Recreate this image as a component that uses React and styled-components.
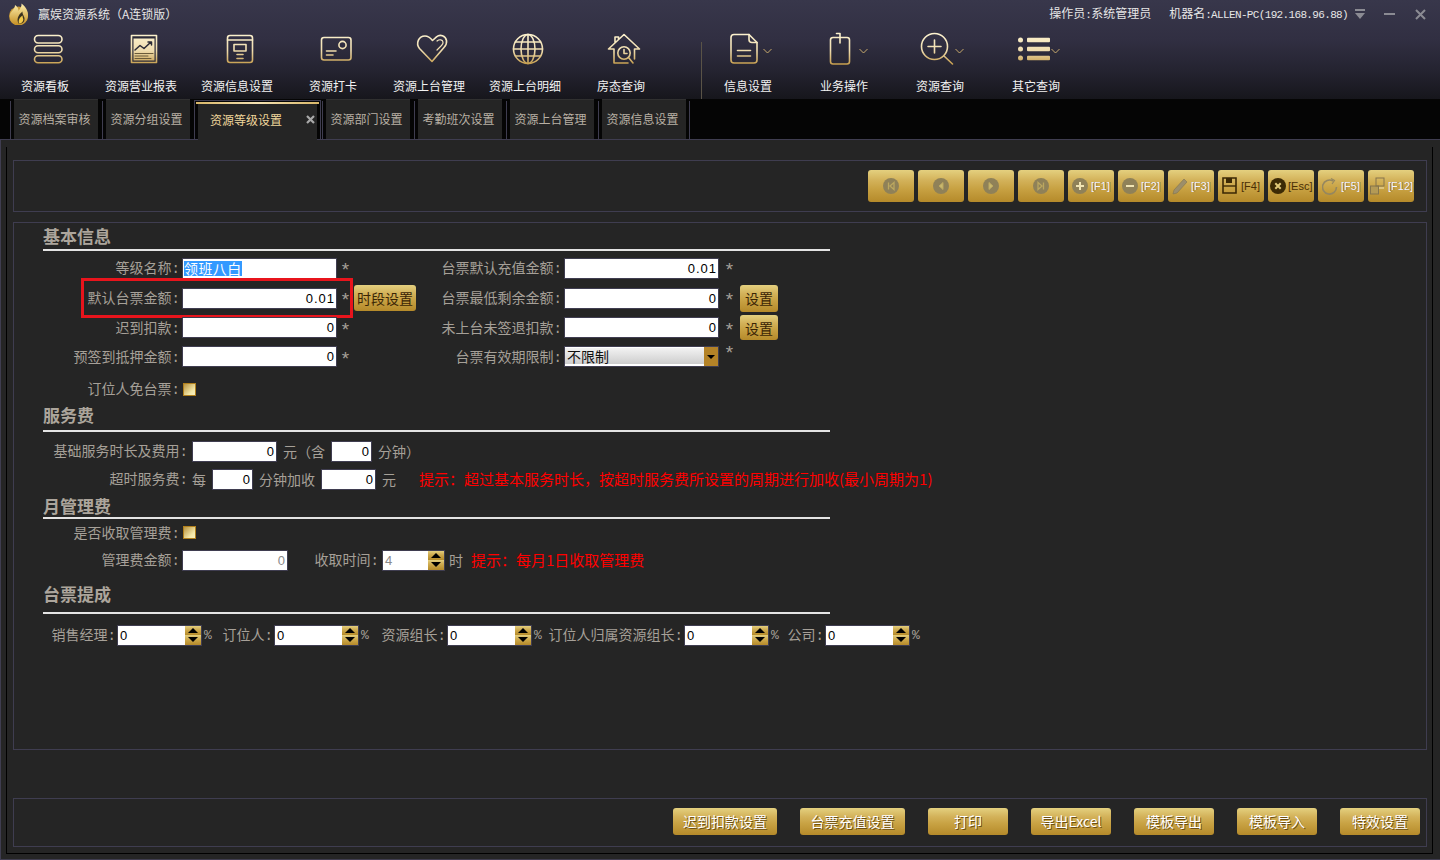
import React, { useId } from "react";
import styled, { createGlobalStyle } from "styled-components";

const CJK = '"Noto Sans CJK SC", "Liberation Sans", sans-serif';
const MONO = '"Liberation Mono", "Noto Sans CJK SC", monospace';
const NUM = '"Liberation Sans", sans-serif';
const LINE = "#3f3d50";
const LABEL = "#a6a098";
const GOLD = "linear-gradient(#e4d07f 0%, #d3b25a 32%, #c8a243 58%, #b58a2a 100%)";

const Global = createGlobalStyle`
  html, body { margin: 0; padding: 0; background: #252525; }
  body { width: 1440px; height: 860px; overflow: hidden; font-family: ${CJK}; }
`;

const Page = styled.div`
  width: 1440px; height: 860px; display: flex; flex-direction: column; overflow: hidden;
`;
const Header = styled.header`
  flex: none; height: 99px; display: flex; flex-direction: column;
  background: linear-gradient(#38374b 0%, #312f42 40%, #242330 72%, #16161c 100%);
`;
const TitleBar = styled.div`
  flex: none; height: 28px; display: flex; align-items: center; padding: 0 14px 0 8px; color: #e6e6e6; font-size: 12px;
`;
const AppTitle = styled.span`margin-left: 8px; line-height: 14px; white-space: nowrap;`;
const Status = styled.div`margin-left: auto; display: flex; align-items: center;`;
const StatusText = styled.span`
  margin-left: ${p => p.$ml || 0}px; line-height: 14px; white-space: nowrap;
`;
const Machine = styled.span`font: 11px/14px ${MONO}; letter-spacing: -0.65px;`;
const WinIcon = styled.svg`flex: none; margin-left: ${p => p.$ml}px; display: block;`;

const Toolbar = styled.nav`flex: 1; display: flex; margin-left: -3px;`;
const ToolItem = styled.div`
  flex: none; width: 96px; display: flex; flex-direction: column; align-items: center; padding-top: 1px;
`;
const ToolIconRow = styled.div`
  display: flex; height: 40px; align-items: center; padding-left: ${p => (p.$menu ? 0 : 6)}px;
`;
const ToolLabel = styled.span`
  margin-top: 10px; font-size: 12px; line-height: 14px; color: #f2f2f2; white-space: nowrap;
`;
const ToolDivider = styled.div`
  flex: none; align-self: flex-end; width: 1px; height: 57px; margin: 0 -2px 0 32px; background: #5a5347;
`;

const TabStrip = styled.div`
  flex: none; height: 40px; display: flex; padding-left: 10px; background: #050505; position: relative; z-index: 1;
`;
const Tab = styled.div`
  flex: none; width: 92px; height: 38px; margin-top: 2px; box-sizing: border-box; border-left: 1px solid ${LINE};
  border-right: ${p => (p.$last ? `1px solid ${LINE}` : "none")};
  padding-left: 3px;
`;
const TabFace = styled.div`
  width: 84px; height: 40px; margin-top: -2px; box-sizing: border-box; background: #252525; border-top: 1px solid #303030;
  display: flex; align-items: center; justify-content: center; padding: 0 3px 2px 0;
  font-size: 12px; color: #b8b0a4; white-space: nowrap;
`;
const ActiveTab = styled.div`
  flex: none; width: 127px; height: 40px; margin: 1px 1px 0 0; box-sizing: border-box; display: flex; flex-direction: column;
  border: 1px solid ${LINE}; border-bottom: none; padding: 1px 1px 0;
`;
const ActiveBar = styled.div`
  flex: none; height: 2px; background: linear-gradient(90deg, #d9b769, #f4e2b3 50%, #d9b769);
`;
const ActiveFace = styled.div`
  flex: 1; margin: 0 2px; background: #252525; display: flex; align-items: center; padding: 0 0 6px 12px;
  font-size: 12px; color: #f0d79c; white-space: nowrap;
`;
const TabClose = styled.svg`margin-left: auto; margin-right: 2px; display: block;`;

const Main = styled.main`
  flex: 1; min-height: 0; display: flex; box-sizing: border-box; background: #252525;
  border-top: 1px solid ${LINE}; border-left: 1px solid ${LINE}; border-bottom: 1px solid ${LINE};
  padding: 7px 7px 5px 5px;
`;
const Inner = styled.div`
  flex: 1; min-width: 0; display: flex; flex-direction: column; box-sizing: border-box;
  border: 1px solid #000; border-top: none; padding: 13px 5px 6px 6px;
`;
const Panel = styled.section`border: 1px solid ${LINE}; box-sizing: border-box;`;
const ActionPanel = styled(Panel)`
  flex: none; height: 52px; display: flex; justify-content: flex-end; gap: 4px; padding: 9px 12px 0 0;
`;
const GoldButton = styled.button`
  flex: none; box-sizing: border-box; border: none; margin: 0; padding: 0; background: ${GOLD}; border-radius: 3px;
  font-family: ${CJK};
`;
const ActionButton = styled(GoldButton)`
  width: 46px; height: 32px; display: flex; align-items: center; justify-content: ${p => (p.$nav ? "center" : "flex-start")};
  padding-left: ${p => (p.$nav ? 0 : p.$wide ? 2 : 4)}px; gap: ${p => (p.$wide ? 2 : 3)}px;
  font: 11px/14px ${NUM}; white-space: nowrap;
  color: ${p => (p.$on ? "#4a2f05" : "#f2f2ff")};
  text-shadow: ${p => (p.$on ? "none" : "1px 0 0 #8f7430")};
`;
const FormPanel = styled(Panel)`
  flex: 1; min-height: 0; margin-top: 10px; padding: 4px 0 0 29px;
`;
const SectionHead = styled.h2`
  width: 787px; margin: ${p => p.$mt || 0}px 0 0; box-sizing: content-box; height: 20px; padding-bottom: ${p => p.$pb}px;
  border-bottom: 2px solid #e4e4e4; font: bold 17px/18px ${CJK}; color: #aca59c;
`;
const Rows = styled.div`margin-top: ${p => p.$mt}px;`;
const Row = styled.div`
  display: flex; align-items: center; position: relative; height: ${p => p.$h || 28}px; gap: ${p => p.$gap || 0}px;
  margin-top: ${p => p.$mt || 0}px;
`;
const Group = styled.div`
  flex: none; width: ${p => p.$w}px; display: flex; align-items: center; height: 100%; position: relative;
`;
const Label = styled.label`
  flex: none; width: ${p => p.$w + 2}px; margin-right: ${p => (p.$mr ?? 4) - 2}px; padding-top: 2px; text-align: right; color: ${LABEL};
  font: 14px/18px ${MONO}; white-space: nowrap;
`;
const Text = styled.span`
  flex: none; color: ${LABEL}; font-size: 14px; line-height: 18px; white-space: nowrap;
`;
const Star = styled.span`
  flex: none; width: ${p => p.$w}px; text-align: center; color: ${LABEL}; font: 19px/14px ${MONO};
  padding-top: ${p => (p.$up ? 0 : 6)}px; margin-bottom: ${p => (p.$up ? 6 : 0)}px;
`;
const Pct = styled.span`
  flex: none; width: 8px; margin-left: 2px; color: ${LABEL}; font: 13px/14px ${MONO}; padding-top: 2px;
`;
const Field = styled.div`
  flex: none; width: ${p => p.$w}px; height: 21px; box-sizing: border-box; border: 1px solid ${LINE}; background: #fff;
  color: ${p => (p.$muted ? "#8a8a8a" : "#000")}; font: 13px/19px ${NUM}; letter-spacing: 1px; text-align: right; padding: 0 1px;
`;
const NameField = styled(Field)`text-align: left; font: 14px/19px ${CJK}; letter-spacing: 0.4px;`;
const Selected = styled.span`background: #3399ff; color: #fff; display: inline-block; height: 15px; line-height: 15px;`;
const SmallButton = styled(GoldButton)`
  width: ${p => p.$w}px; height: ${p => p.$h || 26}px; color: #3a2505; font-size: 14px; line-height: 18px;
`;
const Highlight = styled.div`
  position: absolute; left: 38px; top: 50%; transform: translateY(-50%); width: 272px; height: 40px;
  box-sizing: border-box; border: 3px solid #e8141c; pointer-events: none;
`;
const Check = styled.div`
  flex: none; width: 13px; height: 13px; margin-left: 1px; box-sizing: border-box; border: 1px solid #b07f1c;
  background: linear-gradient(135deg, #b8923e, #f3e7a8 70%, #f8f0c0);
`;
const SelectBox = styled.div`
  flex: none; width: 155px; height: 21px; box-sizing: border-box; border: 1px solid ${LINE}; display: flex; background: #fff;
`;
const SelectValue = styled.div`
  flex: 1; margin: 1px 0 2px; padding-left: 2px; background: linear-gradient(#f2f2f2, #e0e0e0 50%, #cdcdcd);
  font-size: 14px; line-height: 16px; color: #111;
`;
const SelectArrow = styled.div`
  flex: none; width: 14px; background: #b48327; display: flex; align-items: center; justify-content: center;
`;
const Spin = styled.div`
  flex: none; width: ${p => p.$w}px; height: 21px; box-sizing: border-box; border: 1px solid ${LINE}; background: #fff;
  display: flex; color: ${p => (p.$muted ? "#8a8a8a" : "#000")}; font: 13px/19px ${NUM};
`;
const SpinValue = styled.span`flex: 1; padding-left: 2px;`;
const SpinArrows = styled.div`flex: none; width: 16px; display: flex; flex-direction: column;`;
const SpinArrow = styled.div`
  flex: 1; background: ${GOLD}; display: flex; align-items: center; justify-content: center;
`;
const Hint = styled.span`
  flex: none; margin-left: ${p => p.$ml || 0}px; color: #ff0000; font-size: 15px; line-height: 18px; white-space: nowrap;
`;
const BottomPanel = styled(Panel)`
  flex: none; height: 49px; margin-top: 48px; display: flex; justify-content: flex-end; gap: 23px; padding: 9px 6px 0 0;
`;
const BottomButton = styled(GoldButton)`
  width: ${p => p.$w}px; height: 27px; padding-bottom: 2px; color: #fff; font-size: 14px; line-height: 18px; white-space: nowrap;
  text-shadow: 1px 1px 0 #6d4f12;
`;

function Gold({ children }) {
  const id = useId();
  return (
    <svg width="40" height="40" viewBox="0 0 40 40" fill="none" stroke={`url(#${id})`} strokeWidth="1.6"
      strokeLinecap="round" strokeLinejoin="round" style={{ display: "block", flex: "none" }}>
      <defs>
        <linearGradient id={id} gradientUnits="userSpaceOnUse" x1="0" y1="4" x2="0" y2="36">
          <stop offset="0" stopColor="#fdf3d0" />
          <stop offset="0.55" stopColor="#efdcae" />
          <stop offset="1" stopColor="#c39a48" />
        </linearGradient>
      </defs>
      {children(id)}
    </svg>
  );
}

const icons = {
  stack: () => (<>
    <rect x="6.5" y="6.5" width="27.5" height="7.5" rx="3.7" />
    <rect x="6.5" y="16.7" width="27.5" height="7" rx="3.5" />
    <rect x="6.5" y="26.7" width="27.5" height="7" rx="3.5" />
  </>),
  report: (id) => (<>
    <rect x="7.5" y="6.5" width="25" height="27" fill="#2b2a36" />
    <rect x="9.5" y="9.5" width="21" height="22" fill={`url(#${id})`} stroke="none" />
    <path d="M11 21 L16 16.5 L20 19.5 L27 13 M24 13 H27.5 V16" stroke="#2b2a36" strokeWidth="1.5" />
    <path d="M11 24.5 H29 M11 27 H24 M11 29.5 H27" stroke="#6a5a3a" strokeWidth="1" />
  </>),
  info: () => (<>
    <rect x="7.5" y="6.5" width="25" height="27" rx="2.5" />
    <path d="M7.5 11 H32.5 M14 15.5 H26 V22 H14 Z M17 25.5 H23 M17 29.5 H23" />
  </>),
  card: () => (<>
    <rect x="5.5" y="8.5" width="29.5" height="22.5" rx="2.5" />
    <circle cx="26.5" cy="16" r="3.6" />
    <path d="M10.5 22 H20 M10.5 26 H17" />
  </>),
  heart: () => (<>
    <path d="M20 32.5 L7.5 19.5 C3.5 14.5 6.5 7 13 7 C16.5 7 18.5 9 20.5 11.5 L24.5 7.8 C28 5 33.5 6.5 34.5 11.5 C35 14.5 34 16.5 32 18.5 Z" />
    <path d="M25 12 C27.5 10 30.5 10.5 31 13 C31.3 14.5 30.5 15.5 29.5 16.5 L25 21" strokeWidth="1.2" />
  </>),
  globe: () => (<>
    <circle cx="20" cy="20" r="14.5" />
    <ellipse cx="20" cy="20" rx="7" ry="14.5" />
    <path d="M20 5.5 V34.5 M7.5 13 H32.5 M5.5 20 H34.5 M7.5 27 H32.5" />
  </>),
  house: () => (<>
    <path d="M4.5 20 L20 5.5 L35.5 20 H30.5 V30 M10 20 H4.5 M10 20 V34 H24 M11 13.5 V8 H14.5 V10.5" />
    <circle cx="20" cy="24" r="6.2" />
    <path d="M20 20.5 V24.5 H23 M24.7 28.7 L29 34" />
  </>),
  doc: () => (<>
    <path d="M10 5.5 H25 L33 13.5 V31 A3 3 0 0 1 30 34 H10 A3 3 0 0 1 7 31 V8.5 A3 3 0 0 1 10 5.5 Z" />
    <path d="M25 5.5 V10.5 A3 3 0 0 0 28 13.5 H33 M13.5 21.5 H26.5 M13.5 27 H26.5" />
  </>),
  tablet: () => (<>
    <rect x="10.5" y="8.5" width="19" height="26.5" rx="2.5" />
    <path d="M16.5 4.5 H20 V14" />
  </>),
  zoom: () => (<>
    <circle cx="18.5" cy="17.5" r="13" />
    <path d="M28 27 L36.5 35 M18.5 11 V24 M12 17.5 H25" />
  </>),
  list: (id) => (<g fill={`url(#${id})`} stroke="none">
    <circle cx="8.5" cy="11" r="2.5" /><circle cx="8.5" cy="20" r="2.5" /><circle cx="8.5" cy="29" r="2.5" />
    <rect x="15" y="8.7" width="23" height="4.6" rx="1" /><rect x="15" y="17.7" width="23" height="4.6" rx="1" /><rect x="15" y="26.7" width="23" height="4.6" rx="1" />
  </g>),
};

const ChevronSvg = styled.svg`display: block; flex: none; margin-left: -1px; margin-top: 4px;`;
const Chevron = () => (
  <ChevronSvg width="9" height="40" viewBox="0 0 9 40">
    <path d="M0.5 18 L4.5 22 L8.5 18" fill="none" stroke="#d9b872" strokeWidth="0.9" />
  </ChevronSvg>
);

const Logo = () => (
  <svg width="22" height="22" viewBox="0 0 22 22" style={{ display: "block", flex: "none" }}>
    <defs>
      <linearGradient id="logo-g" x1="0" y1="0" x2="0" y2="1">
        <stop offset="0" stopColor="#fff1b0" /><stop offset="1" stopColor="#c58f23" />
      </linearGradient>
    </defs>
    <circle cx="10.5" cy="13" r="9.5" fill="#c89a38" />
    <path d="M2 11 C4 7 7 6 7 2 C10 4 10.5 6 10.5 8 C12 6 14 3 13.5 0.5 C17.5 3.5 20.5 8 20 13 C19.5 18 15 22 10 22 C5 22 1 17.5 2 11 Z" fill="url(#logo-g)" />
    <path d="M11 21 C8 17 10 12 14.5 8.5 C14 12 18 14 16 18.5 C15 20 13 21 11 21 Z" fill="#3a3220" />
    <path d="M11 20.5 C10 17 12 14 14.5 12.5 C14.5 15 16 16 15 18 C14 20 12.5 20.5 11 20.5 Z" fill="#f2c94a" />
  </svg>
);

const Glyph = ({ children }) => (
  <svg width="16" height="18" viewBox="0 0 16 18" style={{ display: "block", flex: "none" }} fill="none">{children}</svg>
);
const disc = "#8f8158";
const actionIcons = {
  first: <><circle cx="8" cy="9" r="8" fill={disc} /><path d="M5.5 5.5 V12.5 M11 5.5 L7 9 L11 12.5 Z" stroke="#bba75f" strokeWidth="1.3" /></>,
  prev: <><circle cx="8" cy="9" r="8" fill={disc} /><path d="M10 5.5 L6 9 L10 12.5 Z" stroke="#bba75f" fill="#c9b96f" /></>,
  next: <><circle cx="8" cy="9" r="8" fill={disc} /><path d="M6 5.5 L10 9 L6 12.5 Z" stroke="#bba75f" fill="#c9b96f" /></>,
  last: <><circle cx="8" cy="9" r="8" fill={disc} /><path d="M10.5 5.5 V12.5 M5 5.5 L9 9 L5 12.5 Z" stroke="#bba75f" strokeWidth="1.3" /></>,
  add: <><circle cx="8" cy="9" r="8" fill={disc} /><path d="M8 5 V13 M4 9 H12" stroke="#f0e4b4" strokeWidth="2" /></>,
  minus: <><circle cx="8" cy="9" r="8" fill={disc} /><path d="M4 9 H12" stroke="#f0e4b4" strokeWidth="2" /></>,
  pencil: <path d="M1 17 L2 13 L12 2 L15 5 L5 16 Z" fill="#9c8e6a" stroke="#80734f" strokeWidth="0.6" />,
  save: <><path d="M1 1 H14 V16 H1 Z" stroke="#3b2905" strokeWidth="1.6" /><rect x="4" y="1" width="6" height="5" fill="#3b2905" /><path d="M1 9 H14" stroke="#3b2905" strokeWidth="1.4" /></>,
  esc: <><circle cx="8" cy="9" r="8" fill="#3c2a05" /><path d="M5.3 6.3 L10.7 11.7 M10.7 6.3 L5.3 11.7" stroke="#e0c878" strokeWidth="2" /></>,
  refresh: <><path d="M11 4 A7 7 0 1 0 14.5 10" stroke="#95875f" strokeWidth="1.6" /><path d="M9 1.5 L12.5 3.5 L10 7" stroke="#95875f" strokeWidth="1.2" /></>,
  windows: <><rect x="0.5" y="9" width="8" height="8" fill="#b49a55" stroke="#85754c" /><rect x="6" y="1" width="8" height="8" stroke="#85754c" /><path d="M9 11 H14" stroke="#f0e4b4" /></>,
};

const mainTools = [
  ["stack", "资源看板"], ["report", "资源营业报表"], ["info", "资源信息设置"], ["card", "资源打卡"],
  ["heart", "资源上台管理"], ["globe", "资源上台明细"], ["house", "房态查询"],
];
const menuTools = [["doc", "信息设置"], ["tablet", "业务操作"], ["zoom", "资源查询"], ["list", "其它查询"]];
const actions = [
  ["first"], ["prev"], ["next"], ["last"], ["add", "[F1]"], ["minus", "[F2]"], ["pencil", "[F3]"],
  ["save", "[F4]", true], ["esc", "[Esc]", true, true], ["refresh", "[F5]"], ["windows", "[F12]", false, true],
];
const bottomActions = [
  ["迟到扣款设置", 104], ["台票充值设置", 105], ["打印", 80], ["导出Excel", 80], ["模板导出", 80], ["模板导入", 80], ["特效设置", 80],
];
const commissions = [["销售经理:", 71], ["订位人:", 59], ["资源组长:", 75], ["订位人归属资源组长:", 139], ["公司:", 43]];

const UpTri = () => <svg width="10" height="5" viewBox="0 0 10 5" style={{ display: "block" }}><path d="M5 0 L10 5 H0 Z" fill="#000" /></svg>;
const DownTri = () => <svg width="10" height="5" viewBox="0 0 10 5" style={{ display: "block" }}><path d="M0 0 H10 L5 5 Z" fill="#000" /></svg>;

const SpinBox = ({ value, w, muted }) => (
  <Spin $w={w} $muted={muted}>
    <SpinValue>{value}</SpinValue>
    <SpinArrows>
      <SpinArrow><UpTri /></SpinArrow>
      <SpinArrow><DownTri /></SpinArrow>
    </SpinArrows>
  </Spin>
);

const Tool = ({ icon, label, menu }) => (
  <ToolItem>
    <ToolIconRow $menu={menu}>
      <Gold>{icons[icon]}</Gold>
      {menu && <Chevron />}
    </ToolIconRow>
    <ToolLabel>{label}</ToolLabel>
  </ToolItem>
);

export default function App() {
  return (
    <Page>
      <Global />
      <Header>
        <TitleBar>
          <Logo />
          <AppTitle>赢娱资源系统（A连锁版）</AppTitle>
          <Status>
            <StatusText>操作员<Machine>:</Machine>系统管理员</StatusText>
            <StatusText $ml={18}>机器名<Machine>:ALLEN-PC(192.168.96.88)</Machine></StatusText>
            <WinIcon $ml={7} width="10" height="10" viewBox="0 0 10 10"><path d="M0 0 H10 V2 H0 Z M0 4 H10 L5 10 Z" fill="#8b8b93" /></WinIcon>
            <WinIcon $ml={19} width="11" height="10" viewBox="0 0 11 10"><path d="M0 4 H11 V6 H0 Z" fill="#8b8b93" /></WinIcon>
            <WinIcon $ml={20} width="11" height="11" viewBox="0 0 11 11"><path d="M1 1 L10 10 M10 1 L1 10" stroke="#8b8b93" strokeWidth="2" /></WinIcon>
          </Status>
        </TitleBar>
        <Toolbar>
          {mainTools.map(([icon, label]) => <Tool key={label} icon={icon} label={label} />)}
          <ToolDivider />
          {menuTools.map(([icon, label]) => <Tool key={label} icon={icon} label={label} menu />)}
        </Toolbar>
      </Header>

      <TabStrip>
        <Tab><TabFace>资源档案审核</TabFace></Tab>
        <Tab><TabFace>资源分组设置</TabFace></Tab>
        <ActiveTab>
          <ActiveBar />
          <ActiveFace>
            资源等级设置
            <TabClose width="9" height="9" viewBox="0 0 9 9"><path d="M1 1 L8 8 M8 1 L1 8" stroke="#a9a9a9" strokeWidth="2.2" /></TabClose>
          </ActiveFace>
        </ActiveTab>
        <Tab><TabFace>资源部门设置</TabFace></Tab>
        <Tab><TabFace>考勤班次设置</TabFace></Tab>
        <Tab><TabFace>资源上台管理</TabFace></Tab>
        <Tab $last><TabFace>资源信息设置</TabFace></Tab>
      </TabStrip>

      <Main>
        <Inner>
          <ActionPanel>
            {actions.map(([icon, text, on, wide]) => (
              <ActionButton key={icon} $nav={!text} $on={on} $wide={wide}>
                <Glyph>{actionIcons[icon]}</Glyph>
                {text}
              </ActionButton>
            ))}
          </ActionPanel>

          <FormPanel>
            <SectionHead $pb={2}>基本信息</SectionHead>
            <Rows $mt={2}>
              <Row $h={30}>
                <Group $w={382}>
                  <Label $w={135}>等级名称:</Label>
                  <NameField $w={155}><Selected>领班八白</Selected></NameField>
                  <Star $w={17}>*</Star>
                </Group>
                <Group $w={360}>
                  <Label $w={135}>台票默认充值金额:</Label>
                  <Field $w={155}>0.01</Field>
                  <Star $w={21}>*</Star>
                </Group>
              </Row>
              <Row $h={30}>
                <Group $w={382}>
                  <Label $w={135}>默认台票金额:</Label>
                  <Field $w={155}>0.01</Field>
                  <Star $w={17}>*</Star>
                  <SmallButton $w={62}>时段设置</SmallButton>
                  <Highlight />
                </Group>
                <Group $w={360}>
                  <Label $w={135}>台票最低剩余金额:</Label>
                  <Field $w={155}>0</Field>
                  <Star $w={21}>*</Star>
                  <SmallButton $w={38} $h={27}>设置</SmallButton>
                </Group>
              </Row>
              <Row $h={29}>
                <Group $w={382}>
                  <Label $w={135}>迟到扣款:</Label>
                  <Field $w={155}>0</Field>
                  <Star $w={17}>*</Star>
                </Group>
                <Group $w={360}>
                  <Label $w={135}>未上台未签退扣款:</Label>
                  <Field $w={155}>0</Field>
                  <Star $w={21}>*</Star>
                  <SmallButton $w={38} $h={25}>设置</SmallButton>
                </Group>
              </Row>
              <Row $h={29}>
                <Group $w={382}>
                  <Label $w={135}>预签到抵押金额:</Label>
                  <Field $w={155}>0</Field>
                  <Star $w={17}>*</Star>
                </Group>
                <Group $w={360}>
                  <Label $w={135}>台票有效期限制:</Label>
                  <SelectBox>
                    <SelectValue>不限制</SelectValue>
                    <SelectArrow><svg width="8" height="4" viewBox="0 0 8 4"><path d="M0 0 H8 L4 4 Z" fill="#000" /></svg></SelectArrow>
                  </SelectBox>
                  <Star $w={21} $up>*</Star>
                </Group>
              </Row>
              <Row $mt={4}>
                <Label $w={135}>订位人免台票:</Label>
                <Check />
              </Row>
            </Rows>

            <SectionHead $mt={3} $pb={4}>服务费</SectionHead>
            <Rows $mt={5}>
              <Row $gap={6}>
                <Label $w={143} $mr={0}>基础服务时长及费用:</Label>
                <Field $w={85}>0</Field>
                <Text>元（含</Text>
                <Field $w={41}>0</Field>
                <Text>分钟）</Text>
              </Row>
              <Row $gap={6}>
                <Label $w={143} $mr={0}>超时服务费:</Label>
                <Text>每</Text>
                <Field $w={41}>0</Field>
                <Text>分钟加收</Text>
                <Field $w={55}>0</Field>
                <Text>元</Text>
                <Hint $ml={17}>提示：超过基本服务时长，按超时服务费所设置的周期进行加收(最小周期为1)</Hint>
              </Row>
            </Rows>

            <SectionHead $mt={4} $pb={0}>月管理费</SectionHead>
            <Row $h={27}>
              <Label $w={135}>是否收取管理费:</Label>
              <Check />
            </Row>
            <Row $gap={4}>
              <Label $w={135} $mr={0}>管理费金额:</Label>
              <Field $w={106} $muted>0</Field>
              <Label $w={85} $mr={1}>收取时间:</Label>
              <SpinBox value="4" w={63} muted />
              <Text>时</Text>
              <Hint $ml={4}>提示：每月1日收取管理费</Hint>
            </Row>

            <SectionHead $mt={11} $pb={7}>台票提成</SectionHead>
            <Row $mt={7}>
              {commissions.map(([label, w]) => (
                <React.Fragment key={label}>
                  <Label $w={w} $mr={3}>{label}</Label>
                  <SpinBox value="0" w={85} />
                  <Pct>%</Pct>
                </React.Fragment>
              ))}
            </Row>
          </FormPanel>

          <BottomPanel>
            {bottomActions.map(([label, w]) => <BottomButton key={label} $w={w}>{label}</BottomButton>)}
          </BottomPanel>
        </Inner>
      </Main>
    </Page>
  );
}
